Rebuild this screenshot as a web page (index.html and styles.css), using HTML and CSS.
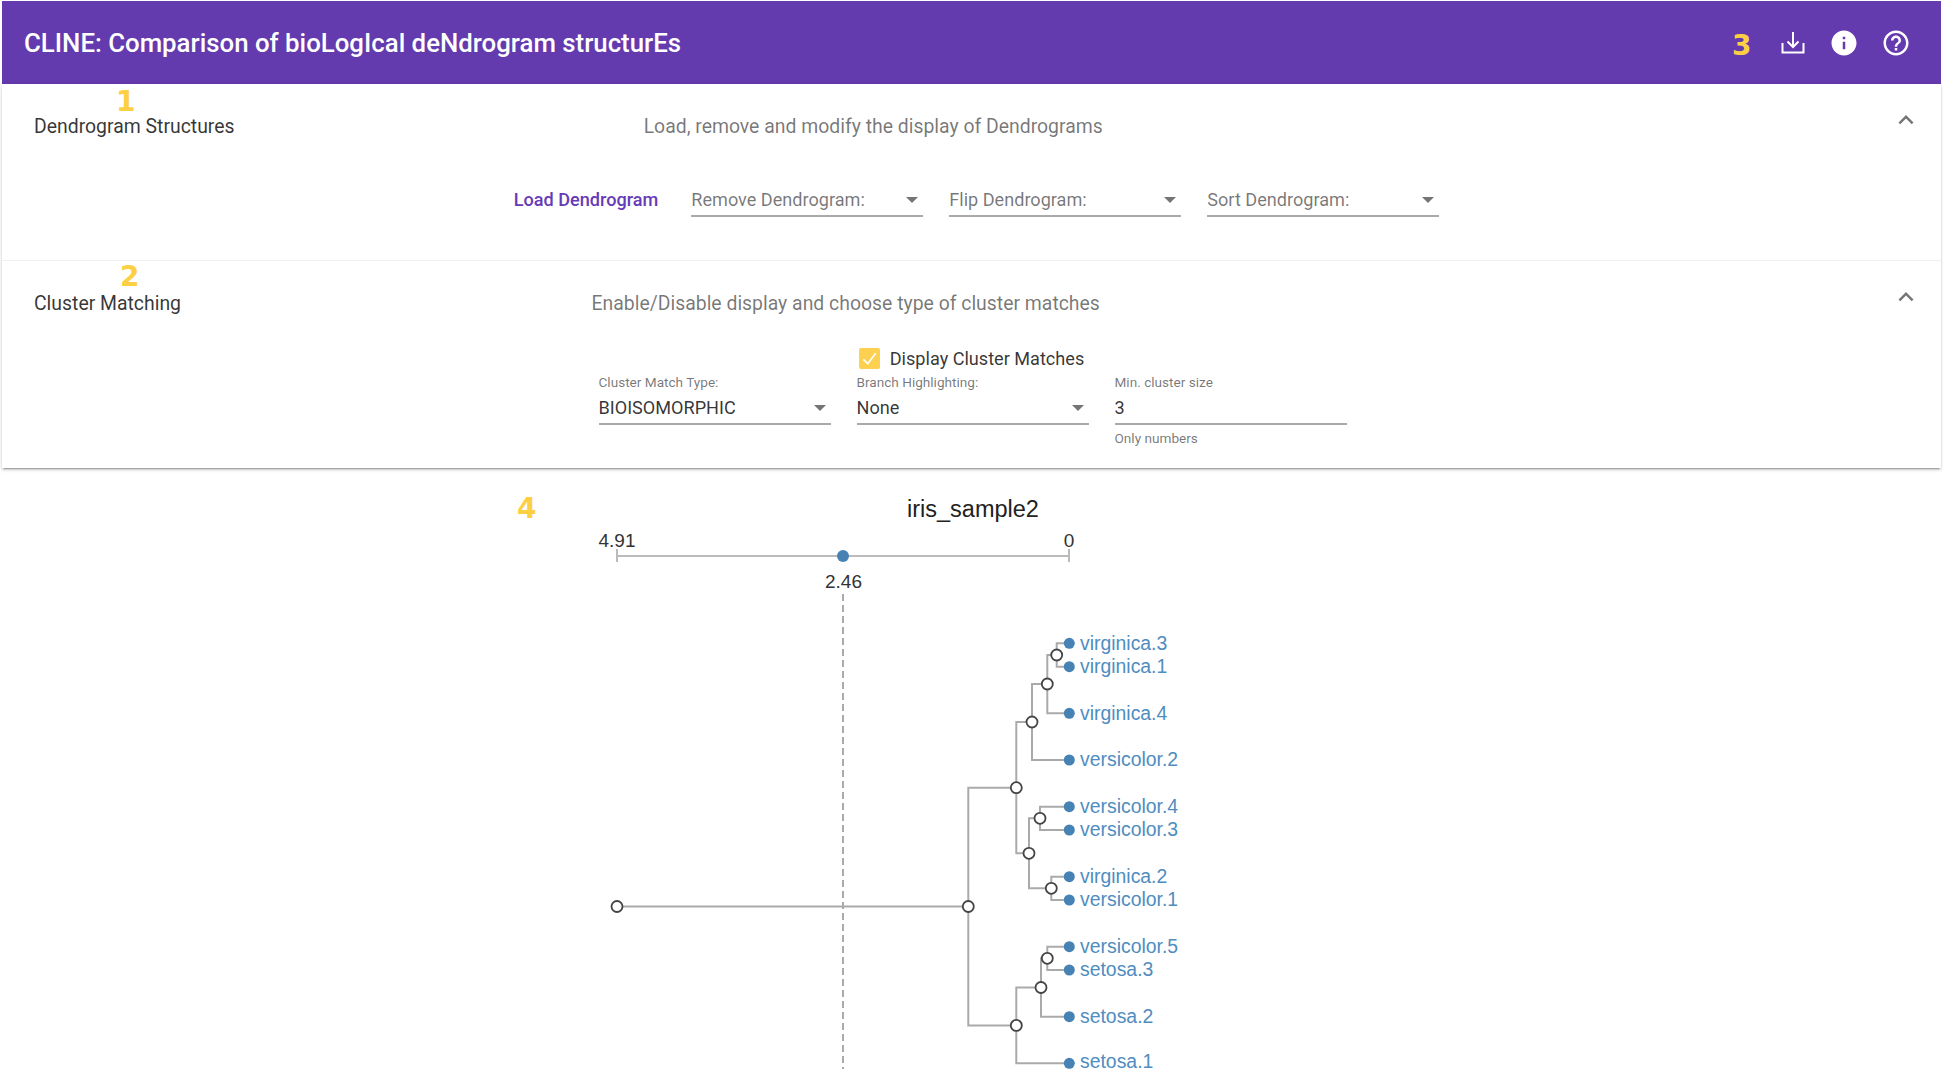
FILE: index.html
```html
<!DOCTYPE html>
<html lang="en">
<head>
    <meta charset="UTF-8">
    <title>CLINE</title>
    <link rel="stylesheet" href="styles.css">
</head>
<body>
    <header class="toolbar">
        <h1 class="toolbar-title">CLINE: Comparison of bioLogIcal deNdrogram structurEs</h1>
        <div class="toolbar-icons">
            <svg class="icon-download" viewBox="0 0 24 24"><path d="M12 1v15M6.5 10.5 12 16l5.500-5.500M1.500 12v9.500h21V12"/></svg>
            <svg class="icon" viewBox="0 0 24 24"><path d="M12 2C6.480 2 2 6.480 2 12s4.480 10 10 10 10-4.480 10-10S17.520 2 12 2zm1 15h-2v-6h2v6zm0-8h-2V7h2v2z"/></svg>
            <svg class="icon" viewBox="0 0 24 24"><path d="M11 18h2v-2h-2v2zm1-16C6.480 2 2 6.480 2 12s4.480 10 10 10 10-4.480 10-10S17.520 2 12 2zm0 18c-4.410 0-8-3.590-8-8s3.590-8 8-8 8 3.590 8 8-3.590 8-8 8zm0-14c-2.210 0-4 1.790-4 4h2c0-1.100.9-2 2-2s2 .9 2 2c0 2-3 1.750-3 5h2c0-2.250 3-2.500 3-5 0-2.210-1.790-4-4-4z"/></svg>
        </div>
    </header>

    <div class="accordion">
        <section class="panel panel-load">
            <div class="panel-header">
                <div class="panel-title">Dendrogram Structures</div>
                <div class="panel-desc">Load, remove and modify the display of Dendrograms</div>
                <svg class="chevron" viewBox="0 0 24 24"><path d="M12 8l-6 6 1.410 1.410L12 10.830l4.590 4.580L18 14z"/></svg>
            </div>
            <div class="load-row">
                <button class="load-btn">Load Dendrogram</button>
                <div class="select placeholder"><span>Remove Dendrogram:</span><i class="arrow"></i></div>
                <div class="select placeholder"><span>Flip Dendrogram:</span><i class="arrow"></i></div>
                <div class="select placeholder"><span>Sort Dendrogram:</span><i class="arrow"></i></div>
            </div>
        </section>

        <section class="panel panel-match">
            <div class="panel-header">
                <div class="panel-title">Cluster Matching</div>
                <div class="panel-desc">Enable/Disable display and choose type of cluster matches</div>
                <svg class="chevron" viewBox="0 0 24 24"><path d="M12 8l-6 6 1.410 1.410L12 10.830l4.590 4.580L18 14z"/></svg>
            </div>
            <div class="check-row">
                <span class="checkbox"><svg viewBox="0 0 24 24"><path d="M5 13l5 5L19 6"/></svg></span>
                <span>Display Cluster Matches</span>
            </div>
            <div class="field-row">
                <div class="field">
                    <label>Cluster Match Type:</label>
                    <div class="select"><span>BIOISOMORPHIC</span><i class="arrow"></i></div>
                </div>
                <div class="field">
                    <label>Branch Highlighting:</label>
                    <div class="select"><span>None</span><i class="arrow"></i></div>
                </div>
                <div class="field">
                    <label>Min. cluster size</label>
                    <div class="select"><span>3</span></div>
                    <small>Only numbers</small>
                </div>
            </div>
        </section>
    </div>

    <svg class="chart" viewBox="2 468 1939 601">
        <text class="chart-title" x="973" y="517">iris_sample2</text>

        <!-- height axis -->
        <path class="axis" d="M617 556H1069M617 549V562M1069 549V562"/>
        <path class="cut" d="M843 594V1069"/>
        <circle class="leaf" cx="843" cy="556" r="6"/>
        <text class="axis-label" x="617" y="547">4.91</text>
        <text class="axis-label" x="1069" y="547">0</text>
        <text class="axis-label" x="843.500" y="588">2.46</text>

        <!-- branches -->
        <path class="link" d="M617 906.500H968.300
            M968.300 906.500V787.700H1016.300M968.300 906.500V1025.400H1016.300
            M1016.300 787.700V722H1032M1016.300 787.700V853.300H1029
            M1032 722V684H1047.300M1032 722V760H1069
            M1047.300 684V655H1056.700M1047.300 684V713.300H1069
            M1056.700 655V643.300H1069M1056.700 655V666.700H1069
            M1029 853.300V818.300H1040M1029 853.300V888.300H1051.300
            M1040 818.300V806.700H1069M1040 818.300V830H1069
            M1051.300 888.300V876.700H1069M1051.300 888.300V900H1069
            M1016.300 1025.400V987.500H1041M1016.300 1025.400V1063.300H1069
            M1041 987.500V958.300H1047.300M1041 987.500V1016.700H1069
            M1047.300 958.300V946.700H1069M1047.300 958.300V970H1069"/>

        <!-- inner nodes -->
        <g class="nodes">
            <circle cx="617" cy="906.500" r="5.500"/>
            <circle cx="968.300" cy="906.500" r="5.500"/>
            <circle cx="1016.300" cy="787.700" r="5.500"/>
            <circle cx="1032" cy="722" r="5.500"/>
            <circle cx="1047.300" cy="684" r="5.500"/>
            <circle cx="1056.700" cy="655" r="5.500"/>
            <circle cx="1029" cy="853.300" r="5.500"/>
            <circle cx="1040" cy="818.300" r="5.500"/>
            <circle cx="1051.300" cy="888.300" r="5.500"/>
            <circle cx="1016.300" cy="1025.400" r="5.500"/>
            <circle cx="1041" cy="987.500" r="5.500"/>
            <circle cx="1047.300" cy="958.300" r="5.500"/>
        </g>

        <!-- leaves -->
        <g class="leaves">
            <circle class="leaf" cx="1069.300" cy="643.300" r="5.500"/><text x="1080" y="649.500">virginica.3</text>
            <circle class="leaf" cx="1069.300" cy="666.700" r="5.500"/><text x="1080" y="672.500">virginica.1</text>
            <circle class="leaf" cx="1069.300" cy="713.300" r="5.500"/><text x="1080" y="719.500">virginica.4</text>
            <circle class="leaf" cx="1069.300" cy="760" r="5.500"/><text x="1080" y="765.500">versicolor.2</text>
            <circle class="leaf" cx="1069.300" cy="806.700" r="5.500"/><text x="1080" y="812.500">versicolor.4</text>
            <circle class="leaf" cx="1069.300" cy="830" r="5.500"/><text x="1080" y="835.500">versicolor.3</text>
            <circle class="leaf" cx="1069.300" cy="876.700" r="5.500"/><text x="1080" y="882.500">virginica.2</text>
            <circle class="leaf" cx="1069.300" cy="900" r="5.500"/><text x="1080" y="905.500">versicolor.1</text>
            <circle class="leaf" cx="1069.300" cy="946.700" r="5.500"/><text x="1080" y="952.500">versicolor.5</text>
            <circle class="leaf" cx="1069.300" cy="970" r="5.500"/><text x="1080" y="975.500">setosa.3</text>
            <circle class="leaf" cx="1069.300" cy="1016.700" r="5.500"/><text x="1080" y="1022.500">setosa.2</text>
            <circle class="leaf" cx="1069.300" cy="1063.300" r="5.500"/><text x="1080" y="1068">setosa.1</text>
        </g>
    </svg>

    <!-- callout numbers on top of the page -->
    <span class="callout callout-1">1</span>
    <span class="callout callout-2">2</span>
    <span class="callout callout-3">3</span>
    <span class="callout callout-4">4</span>
</body>
</html>
```

FILE: styles.css
```css
html, body {
    height: 100%;
    overflow: hidden;
}
body {
    margin: 0;
    padding: 1px 2px 0;
    box-sizing: border-box;
    background: #fff;
    font-family: Roboto, sans-serif;
    font-size: 18.1px;
    color: rgba(0, 0, 0, 0.8);
    position: relative;
}
.toolbar {
    height: 83px;
    background: #643aaf;
    color: #fff;
    display: flex;
    align-items: center;
    justify-content: space-between;
    padding: 0 30px 0 22px;
}
.toolbar-title {
    margin: 0;
    font-size: 25.8px;
    font-weight: 500;
}
.toolbar-icons {
    display: flex;
    align-items: center;
    gap: 22px;
}
.icon {
    width: 30px;
    height: 30px;
    fill: #fff;
}
.icon-download {
    width: 24px;
    height: 24px;
    margin-right: 2px;
    fill: none;
    stroke: #fff;
    stroke-width: 2;
}
.accordion {
    box-shadow: 0 3px 1px -2px rgba(0,0,0,0.2), 0 2px 2px 0 rgba(0,0,0,0.14), 0 1px 5px 0 rgba(0,0,0,0.12);
}
.panel-load {
    height: 176px;
}
.panel-match {
    height: 208px;
    border-top: 1px solid rgba(0, 0, 0, 0.06);
    box-sizing: border-box;
}
.panel-header {
    height: 84px;
    display: flex;
    align-items: center;
    padding: 0 24px 0 32px;
    font-size: 19.4px;
}
.panel-title {
    flex: 1 1 auto;
    margin-right: 20px;
}
.panel-desc {
    flex: 2 1 auto;
    color: rgba(0, 0, 0, 0.54);
}
.chevron {
    width: 30px;
    height: 30px;
    margin: -12px -4px 0 10px;
    fill: rgba(0, 0, 0, 0.54);
}
.load-row {
    display: flex;
    justify-content: center;
    align-items: flex-start;
    gap: 26px;
    padding: 16px 0 0 10px;
}
.load-btn {
    border: none;
    background: none;
    padding: 0;
    margin: 5px 7px 0 0;
    font: 500 18.1px Roboto, sans-serif;
    color: #673ab7;
}
.select {
    width: 232px;
    height: 33px;
    box-sizing: border-box;
    border-bottom: 2px solid #aaa;
    display: flex;
    align-items: center;
    justify-content: space-between;
    padding-right: 5px;
}
.select.placeholder {
    color: rgba(0, 0, 0, 0.54);
}
.arrow {
    width: 0;
    height: 0;
    border-left: 6px solid transparent;
    border-right: 6px solid transparent;
    border-top: 6px solid rgba(0, 0, 0, 0.54);
}
.check-row {
    display: flex;
    justify-content: center;
    align-items: center;
    gap: 10px;
    height: 21px;
    margin-top: 3px;
}
.checkbox {
    width: 21px;
    height: 21px;
    background: #fdd04f;
    border-radius: 2px;
}
.checkbox svg {
    display: block;
    fill: none;
    stroke: #fff;
    stroke-width: 2;
}
.field-row {
    display: flex;
    justify-content: center;
    gap: 26px;
    margin-top: 5px;
    padding-left: 2px;
}
.field {
    width: 232px;
    color: rgba(0, 0, 0, 0.54);
}
.field label {
    display: block;
    font-size: 13.6px;
    line-height: 16px;
}
.field .select {
    height: 35px;
    padding-top: 2px;
    color: rgba(0, 0, 0, 0.8);
}
.field small {
    display: block;
    font-size: 13.6px;
    line-height: 16px;
    margin-top: 5px;
}
.chart {
    display: block;
    width: 1939px;
    height: 601px;
}
.chart text {
    font-family: "Liberation Sans", Arial, sans-serif;
}
.chart-title {
    font-size: 23.500px;
    text-anchor: middle;
    fill: #222;
}
.axis-label {
    font-size: 19px;
    text-anchor: middle;
    fill: #333;
}
.axis {
    fill: none;
    stroke: #bbb;
    stroke-width: 2;
}
.cut {
    fill: none;
    stroke: #aaa;
    stroke-width: 2;
    stroke-dasharray: 7 4;
}
.link {
    fill: none;
    stroke: #aaa;
    stroke-width: 2;
}
.nodes circle {
    fill: #fff;
    stroke: #444;
    stroke-width: 1.800;
}
.leaf {
    fill: #4682b4;
}
.leaves text {
    font-size: 19.400px;
    fill: #4f8dc0;
}
.callout {
    position: absolute;
    font: bold 28px "DejaVu Sans", sans-serif;
    line-height: 32px;
    color: #fdd044;
}
.callout-1 { left: 116px; top: 86px; }
.callout-2 { left: 120px; top: 261px; }
.callout-3 { left: 1732px; top: 30px; }
.callout-4 { left: 517px; top: 493px; }
```
